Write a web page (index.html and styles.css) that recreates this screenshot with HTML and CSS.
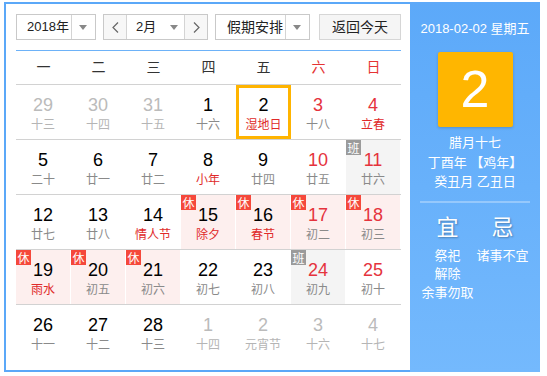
FILE: index.html
```html
<!DOCTYPE html>
<html lang="zh">
<head>
<meta charset="utf-8">
<link rel="stylesheet" href="styles.css">
</head>
<body>
<div class="cal">
  <div class="main">
    <div class="toolbar">
      <div class="sel sel-year"><span class="sel-text">2018年</span><span class="sel-arrow"><i class="tri"></i></span></div>
      <div class="month-group">
        <span class="nav"><svg width="7" height="11" viewBox="0 0 7 11"><polyline points="6,0.5 1,5.5 6,10.5" fill="none" stroke="#666" stroke-width="1.2"/></svg></span>
        <span class="month-mid"><span class="sel-text">2月</span><i class="tri"></i></span>
        <span class="nav"><svg width="7" height="11" viewBox="0 0 7 11"><polyline points="1,0.5 6,5.5 1,10.5" fill="none" stroke="#666" stroke-width="1.2"/></svg></span>
      </div>
      <div class="sel sel-hol"><span class="sel-text">假期安排</span><span class="sel-arrow"><i class="tri"></i></span></div>
      <div class="btn-today">返回今天</div>
    </div>
    <div class="week">
      <span>一</span><span>二</span><span>三</span><span>四</span><span>五</span><span class="red">六</span><span class="red">日</span>
    </div>
    <div class="grid">
      <div class="row">
        <div class="cell other"><b>29</b><small>十三</small></div>
        <div class="cell other"><b>30</b><small>十四</small></div>
        <div class="cell other"><b>31</b><small>十五</small></div>
        <div class="cell"><b>1</b><small>十六</small></div>
        <div class="cell today"><b>2</b><small class="fest">湿地日</small></div>
        <div class="cell wk"><b>3</b><small>十八</small></div>
        <div class="cell wk"><b>4</b><small class="fest">立春</small></div>
      </div>
      <div class="row">
        <div class="cell"><b>5</b><small>二十</small></div>
        <div class="cell"><b>6</b><small>廿一</small></div>
        <div class="cell"><b>7</b><small>廿二</small></div>
        <div class="cell"><b>8</b><small class="fest">小年</small></div>
        <div class="cell"><b>9</b><small>廿四</small></div>
        <div class="cell wk"><b>10</b><small>廿五</small></div>
        <div class="cell wk work"><span class="badge gray">班</span><b>11</b><small>廿六</small></div>
      </div>
      <div class="row">
        <div class="cell"><b>12</b><small>廿七</small></div>
        <div class="cell"><b>13</b><small>廿八</small></div>
        <div class="cell"><b>14</b><small class="fest">情人节</small></div>
        <div class="cell rest"><span class="badge">休</span><b>15</b><small class="fest">除夕</small></div>
        <div class="cell rest"><span class="badge">休</span><b>16</b><small class="fest">春节</small></div>
        <div class="cell rest wk"><span class="badge">休</span><b>17</b><small>初二</small></div>
        <div class="cell rest wk"><span class="badge">休</span><b>18</b><small>初三</small></div>
      </div>
      <div class="row">
        <div class="cell rest"><span class="badge">休</span><b>19</b><small class="fest">雨水</small></div>
        <div class="cell rest"><span class="badge">休</span><b>20</b><small>初五</small></div>
        <div class="cell rest"><span class="badge">休</span><b>21</b><small>初六</small></div>
        <div class="cell"><b>22</b><small>初七</small></div>
        <div class="cell"><b>23</b><small>初八</small></div>
        <div class="cell wk work"><span class="badge gray">班</span><b>24</b><small>初九</small></div>
        <div class="cell wk"><b>25</b><small>初十</small></div>
      </div>
      <div class="row">
        <div class="cell"><b>26</b><small>十一</small></div>
        <div class="cell"><b>27</b><small>十二</small></div>
        <div class="cell"><b>28</b><small>十三</small></div>
        <div class="cell other"><b>1</b><small>十四</small></div>
        <div class="cell other"><b>2</b><small>元宵节</small></div>
        <div class="cell other"><b>3</b><small>十六</small></div>
        <div class="cell other"><b>4</b><small>十七</small></div>
      </div>
    </div>
  </div>
  <div class="side">
    <div class="side-date">2018-02-02 星期五</div>
    <div class="big-day">2</div>
    <div class="lunar">
      <div>腊月十七</div>
      <div>丁酉年 【鸡年】</div>
      <div>癸丑月 乙丑日</div>
    </div>
    <div class="sep"></div>
    <div class="yiji">
      <div class="col">
        <div class="yj-title">宜</div>
        <div class="yj-item">祭祀</div>
        <div class="yj-item">解除</div>
        <div class="yj-item">余事勿取</div>
      </div>
      <div class="col">
        <div class="yj-title">忌</div>
        <div class="yj-item">诸事不宜</div>
      </div>
    </div>
  </div>
</div>
</body>
</html>
```
FILE: styles.css
```css
html, body {
  margin: 0;
  padding: 0;
  background: #fff;
}
body {
  padding: 2px 0 0 4px;
  font-family: "Liberation Sans", Arial, "Noto Sans CJK SC", sans-serif;
  color: #333;
}
.cal {
  display: flex;
  width: 538px;
  height: 370px;
}
.main {
  width: 406px;
  box-sizing: border-box;
  border: 2px solid #5ba8f8;
  border-right: none;
  padding: 10px 0 0 10px;
}
.toolbar {
  display: flex;
  height: 26px;
  width: 385px;
  font-size: 14px;
}
.sel {
  display: flex;
  box-sizing: border-box;
  height: 26px;
  border: 1px solid #c9c9c9;
  background: #fff;
}
.sel-text {
  line-height: 24px;
  color: #222;
}
.sel-arrow {
  display: flex;
  align-items: center;
  justify-content: center;
  border-left: 1px solid #d4d4d4;
}
.tri {
  display: block;
  width: 0;
  height: 0;
  border-left: 4px solid transparent;
  border-right: 4px solid transparent;
  border-top: 5px solid #888;
}
.sel-year {
  width: 80px;
}
.sel-year .sel-text {
  width: 55px;
  padding-left: 10px;
  box-sizing: border-box;
  font-size: 13px;
}
.sel-year .sel-arrow {
  width: 24px;
}
.month-group {
  display: flex;
  box-sizing: border-box;
  height: 26px;
  width: 105px;
  margin-left: 7px;
  border: 1px solid #c9c9c9;
}
.nav {
  width: 22px;
  display: flex;
  align-items: center;
  justify-content: center;
  background: #f7f7f7;
}
.month-mid {
  display: flex;
  align-items: center;
  width: 59px;
  box-sizing: border-box;
  border-left: 1px solid #d4d4d4;
  border-right: 1px solid #d4d4d4;
  padding-left: 9px;
  background: #fff;
}
.month-mid .sel-text {
  font-size: 13px;
  width: 34px;
}
.sel-hol {
  width: 95px;
  margin-left: 7px;
}
.sel-hol .sel-text {
  width: 70px;
  padding-left: 11px;
  box-sizing: border-box;
  letter-spacing: 0;
}
.sel-hol .sel-arrow {
  width: 24px;
}
.btn-today {
  box-sizing: border-box;
  width: 82px;
  height: 26px;
  margin-left: 9px;
  border: 1px solid #d6d6d6;
  background: #f5f5f5;
  text-align: center;
  line-height: 24px;
  color: #222;
}
.week {
  display: flex;
  width: 385px;
  margin-top: 10px;
  border-top: 1px solid #6db2f8;
  height: 33px;
  font-size: 14px;
  color: #333;
}
.week span {
  width: 55px;
  text-align: center;
  line-height: 33px;
}
.week .red {
  color: #e53333;
}
.grid {
  width: 385px;
}
.row {
  display: flex;
  border-top: 1px solid #d2d2d2;
  height: 54px;
}
.row:last-child {
  height: 54px;
}
.cell {
  position: relative;
  width: 55px;
  box-sizing: border-box;
  border-right: 1px solid #fff;
  padding-top: 9px;
  text-align: center;
}
.cell b {
  display: block;
  font-weight: normal;
  font-size: 18px;
  line-height: 22px;
  color: #000;
}
.cell small {
  display: block;
  font-size: 12px;
  line-height: 18px;
  color: #8a8a8a;
}
.cell.wk b {
  color: #e5333d;
}
.cell small.fest {
  color: #e02a2a;
}
.cell.other b {
  color: #bbb;
}
.cell.other small {
  color: #b5b5b5;
}
.cell.rest {
  background: #fdefee;
}
.cell.work {
  background: #f4f4f4;
}
.cell.today {
  border: 3px solid #ffb400;
  padding-top: 6px;
}
.cell.today b {
  line-height: 22px;
}
.badge {
  position: absolute;
  left: 0;
  top: 0;
  width: 15px;
  height: 15px;
  background: #f5483b;
  color: #fff;
  font-size: 12px;
  line-height: 15px;
  text-align: center;
  font-family: "Noto Sans CJK SC", sans-serif;
}
.badge.gray {
  background: #9b9b9b;
}
.side {
  width: 130px;
  height: 370px;
  background: linear-gradient(#5ca9f9, #74b9fd);
  color: #fff;
  display: flex;
  flex-direction: column;
  align-items: center;
  padding-top: 17px;
  box-sizing: border-box;
}
.side-date {
  font-size: 13px;
  line-height: 20px;
}
.big-day {
  margin-top: 13px;
  width: 75px;
  height: 75px;
  background: #ffb600;
  border-radius: 2px;
  box-shadow: 0 1px 3px rgba(0, 0, 0, 0.18);
  text-align: center;
  font-size: 52px;
  line-height: 75px;
}
.lunar {
  margin-top: 6px;
  font-size: 13px;
  line-height: 19.5px;
  text-align: center;
}
.sep {
  margin-top: 9px;
  width: 110px;
  height: 2px;
  background: rgba(255, 255, 255, 0.3);
}
.yiji {
  display: flex;
  width: 110px;
  margin-top: 11px;
}
.col {
  width: 55px;
  text-align: center;
}
.yj-title {
  font-size: 22px;
  line-height: 28px;
  text-shadow: 1px 1px 2px rgba(0, 0, 0, 0.3);
  margin-bottom: 5px;
}
.yj-item {
  font-size: 13px;
  line-height: 18.5px;
  white-space: nowrap;
}
```
